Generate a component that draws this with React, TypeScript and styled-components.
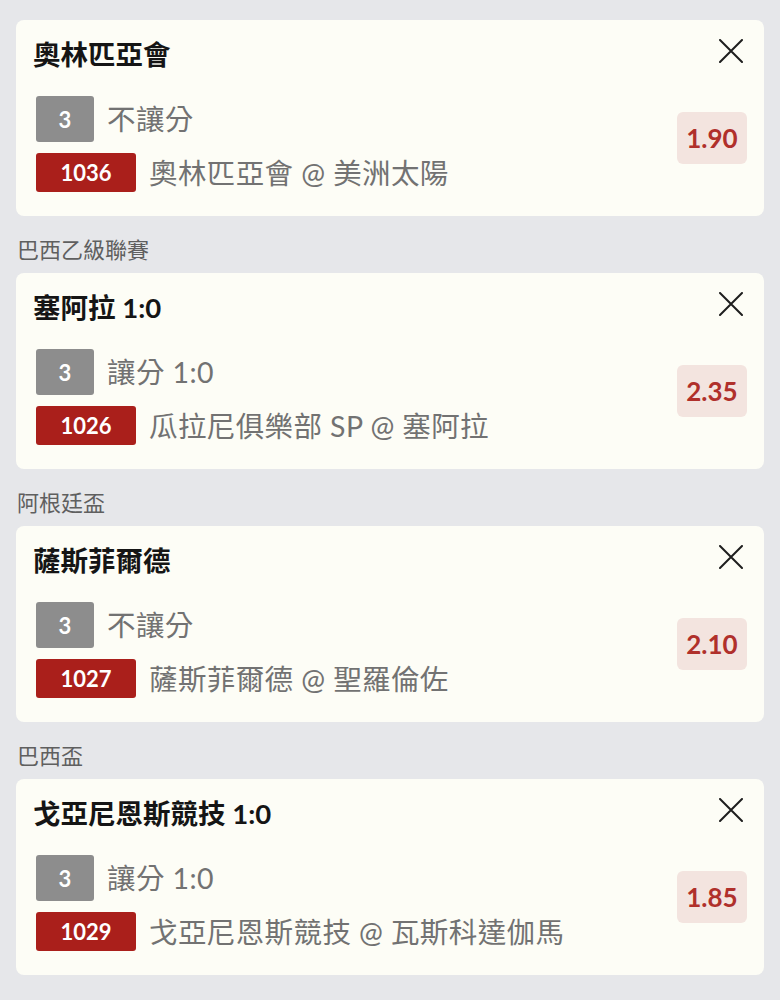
import * as React from 'react'
import styled, { createGlobalStyle } from 'styled-components'

const GlobalStyle = createGlobalStyle`
  body {
    margin: 0;
    background: #e6e7ea;
    font-family: Lato, "Noto Sans CJK TC", sans-serif;
  }
`

const List = styled.div`
  display: flex;
  flex-direction: column;
  padding: 20px 16px 24px;
`

const LeagueLabel = styled.div`
  padding: 21px 1px 10px;
  font-size: 22px;
  line-height: 26px;
  color: #5f5f5f;
`

const Card = styled.div`
  background: #fdfdf6;
  border-radius: 8px;
  padding: 17px 17px 24px 20px;
  display: flex;
  flex-direction: column;
`

const Header = styled.div`
  display: flex;
  align-items: flex-start;
  justify-content: space-between;
`

const Title = styled.div`
  font-size: 27.5px;
  line-height: 36px;
  font-weight: 700;
  color: #151515;
  margin-left: -3px;
`

const CloseButton = styled.button`
  border: none;
  background: none;
  padding: 0;
  margin: 2px 4px 0 0;
  width: 24px;
  height: 24px;
  display: flex;
  cursor: pointer;
`

const Body = styled.div`
  display: flex;
  justify-content: space-between;
  margin-top: 23px;
`

const Rows = styled.div`
  display: flex;
  flex-direction: column;
  gap: 11px;
`

const Row = styled.div`
  display: flex;
  align-items: center;
  gap: 13px;
`

const Badge = styled.span<{ $kind: 'type' | 'code' }>`
  display: flex;
  align-items: center;
  justify-content: center;
  width: ${(p) => (p.$kind === 'type' ? '58px' : '100px')};
  height: ${(p) => (p.$kind === 'type' ? '46px' : '39px')};
  background: ${(p) => (p.$kind === 'type' ? '#8d8d8d' : '#aa1f1b')};
  border-radius: 3px;
  color: #fff;
  font-family: Lato, sans-serif;
  font-size: 22px;
  font-weight: 700;
`

const RowText = styled.span`
  font-size: 28.5px;
  line-height: 36px;
  letter-spacing: 0.4px;
  color: #727272;
`

const Odds = styled.div`
  align-self: flex-start;
  margin-top: 16px;
  width: 70px;
  height: 52px;
  border-radius: 6px;
  background: #f3e4df;
  color: #b0302b;
  font-family: Lato, sans-serif;
  font-size: 26px;
  font-weight: 700;
  display: flex;
  align-items: center;
  justify-content: center;
`

type Bet = {
  league?: string
  title: string
  type: string
  code: string
  match: string
  odds: string
}

const bets: Bet[] = [
  {
    title: '奧林匹亞會',
    type: '不讓分',
    code: '1036',
    match: '奧林匹亞會 @ 美洲太陽',
    odds: '1.90',
  },
  {
    league: '巴西乙級聯賽',
    title: '塞阿拉 1:0',
    type: '讓分 1:0',
    code: '1026',
    match: '瓜拉尼俱樂部 SP @ 塞阿拉',
    odds: '2.35',
  },
  {
    league: '阿根廷盃',
    title: '薩斯菲爾德',
    type: '不讓分',
    code: '1027',
    match: '薩斯菲爾德 @ 聖羅倫佐',
    odds: '2.10',
  },
  {
    league: '巴西盃',
    title: '戈亞尼恩斯競技 1:0',
    type: '讓分 1:0',
    code: '1029',
    match: '戈亞尼恩斯競技 @ 瓦斯科達伽馬',
    odds: '1.85',
  },
]

function CloseIcon() {
  return (
    <svg width="24" height="24" viewBox="0 0 24 24">
      <path
        d="M1 1 L23 23 M23 1 L1 23"
        stroke="#1e1e1e"
        strokeWidth="2"
        strokeLinecap="round"
      />
    </svg>
  )
}

function BetCard({ bet }: { bet: Bet }) {
  return (
    <Card>
      <Header>
        <Title>{bet.title}</Title>
        <CloseButton aria-label="remove">
          <CloseIcon />
        </CloseButton>
      </Header>
      <Body>
        <Rows>
          <Row>
            <Badge $kind="type">3</Badge>
            <RowText>{bet.type}</RowText>
          </Row>
          <Row>
            <Badge $kind="code">{bet.code}</Badge>
            <RowText>{bet.match}</RowText>
          </Row>
        </Rows>
        <Odds>{bet.odds}</Odds>
      </Body>
    </Card>
  )
}

export default function App() {
  return (
    <>
      <GlobalStyle />
      <List>
        {bets.map((bet) => (
          <React.Fragment key={bet.code}>
            {bet.league && <LeagueLabel>{bet.league}</LeagueLabel>}
            <BetCard bet={bet} />
          </React.Fragment>
        ))}
      </List>
    </>
  )
}
